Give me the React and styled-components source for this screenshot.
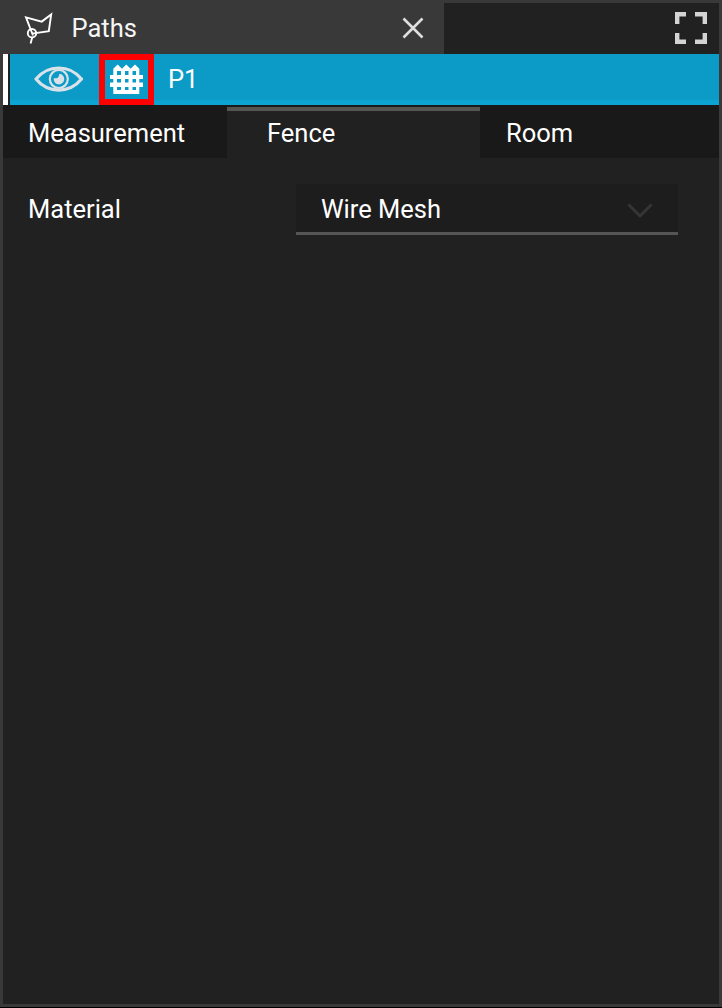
import React from "react";
import styled, { createGlobalStyle } from "styled-components";

const GlobalStyle = createGlobalStyle`
  * { box-sizing: border-box; }
  body {
    margin: 0;
    background: #000;
    color: #fff;
    font-family: Roboto, "Liberation Sans", sans-serif;
    font-size: 25.5px;
  }
`;

const Panel = styled.div`
  display: flex;
  flex-direction: column;
  height: 1007px;
  border: 3px solid #393939;
  background: #212121;
`;

const TitleBar = styled.header`
  display: flex;
  justify-content: space-between;
  height: 51px;
`;

const TitleTab = styled.div`
  display: flex;
  align-items: center;
  width: 441px;
  margin-top: -3px;
  padding: 3px 20px 0 20px;
  background: #393939;
`;

const Title = styled.span`
  flex: 1;
  margin-left: 18.5px;
  line-height: 51px;
  color: #f5f5f5;
`;

const IconButton = styled.button`
  display: flex;
  padding: 0;
  border: 0;
  background: none;
`;

const CloseButton = styled(IconButton)`
  padding-bottom: 2px;
`;

const ExpandButton = styled(IconButton)`
  padding: 9px 12px 0 0;
`;

const PathRow = styled.div`
  display: flex;
  align-items: stretch;
  height: 51px;
  background: linear-gradient(#0c9ac6 0 45px, #0ca4d2 47px);
`;

const SelectionMark = styled.div`
  width: 7px;
  border-right: 2px solid #212121;
  background: #fff;
`;

const Visibility = styled(IconButton)`
  width: 89px;
  padding: 10px 0 0 24px;
`;

const FenceToggle = styled(IconButton)`
  width: 55px;
  border: 6px solid #ff0000;
`;

const PathName = styled.span`
  margin-left: 14px;
  line-height: 50px;
`;

const Tabs = styled.nav`
  display: flex;
  height: 53px;
  padding-top: 2px;
  background: #191919;
`;

const Tab = styled.div`
  width: ${(p) => p.$width}px;
  padding-left: ${(p) => p.$inset}px;
  border-top: 4px solid ${(p) => (p.$active ? "#555651" : "transparent")};
  background: ${(p) => (p.$active ? "#212121" : "transparent")};
  line-height: 44px;
`;

const Field = styled.div`
  display: flex;
  margin-top: 26px;
  padding-left: 25px;
`;

const Label = styled.span`
  width: 268px;
  line-height: 51px;
`;

const Select = styled.div`
  display: flex;
  justify-content: space-between;
  width: 382px;
  height: 51px;
  padding: 0 25px;
  border-bottom: 3px solid #555;
  background: #1d1d1d;
  line-height: 51px;
`;

const Chevron = styled.svg`
  margin-top: 18px;
`;

const PathIcon = () => (
  <svg width="30" height="34" viewBox="0 0 30 34" fill="none" stroke="#fff" strokeWidth="1.9">
    <path d="M10 23.5 L3 5.4 L18.7 9.6 L28.2 2.4 L25.8 19.2 L9 21.6 M9.3 25 L7.6 31.5" />
    <circle cx="9" cy="21.2" r="4.2" />
  </svg>
);

const CloseIcon = () => (
  <svg width="22" height="22" viewBox="0 0 22 22" stroke="#dedede" strokeWidth="2.6">
    <path d="M1.5 1.5 L20.5 20.5 M20.5 1.5 L1.5 20.5" />
  </svg>
);

const ExpandIcon = () => (
  <svg width="32" height="32" viewBox="0 0 32 32" fill="none" stroke="#d3d3d3" strokeWidth="4.4">
    <path d="M11 2.2 H2.2 V12 M20 2.2 H29.8 V12 M2.2 21 V29.8 H11 M29.8 21 V29.8 H20" />
  </svg>
);

const EyeIcon = () => (
  <svg width="50" height="30" viewBox="0 0 50 30" fill="none" stroke="#d9e2e8">
    <path d="M2 15 C14 0.3 35.5 0.3 47.5 15 C35.5 29.7 14 29.7 2 15 Z" strokeWidth="3.2" strokeLinejoin="round" />
    <circle cx="24.8" cy="15" r="9" strokeWidth="2.2" />
    <path d="M25.5 9.8 A5.3 5.3 0 1 1 19.7 14.2 H22.5 A2.5 2.5 0 0 0 24.8 12 Z" fill="#d9e2e8" stroke="none" />
  </svg>
);

const FenceIcon = () => (
  <svg width="43" height="39" viewBox="0 0 43 39" fill="#fff">
    <path fillRule="evenodd" d="M8.3 34 V27 H5 V22.5 H8.3 V19 H5 V15 H8.3 V8.8 L12.6 4.6 L17 8.8 L21.3 4.6 L25.6 8.8 L30 4.6 L34.3 8.8 V15 H38 V19 H34.3 V22.5 H38 V27 H34.3 V34 Z
      M12 11 V15 H16 V11 Z M20 11 V15 H23.5 V11 Z M27.5 11 V15 H31 V11 Z
      M12 19 V22.5 H16 V19 Z M20 19 V22.5 H23.5 V19 Z M27.5 19 V22.5 H31 V19 Z
      M12 27 V30 H16 V27 Z M20 27 V30 H23.5 V27 Z M27.5 27 V30 H31 V27 Z" />
  </svg>
);

export default function App() {
  return (
    <>
      <GlobalStyle />
      <Panel>
        <TitleBar>
          <TitleTab>
            <PathIcon />
            <Title>Paths</Title>
            <CloseButton aria-label="Close"><CloseIcon /></CloseButton>
          </TitleTab>
          <ExpandButton aria-label="Expand"><ExpandIcon /></ExpandButton>
        </TitleBar>
        <PathRow>
          <SelectionMark />
          <Visibility aria-label="Visibility"><EyeIcon /></Visibility>
          <FenceToggle aria-label="Fence"><FenceIcon /></FenceToggle>
          <PathName>P1</PathName>
        </PathRow>
        <Tabs>
          <Tab $width={224} $inset={25}>Measurement</Tab>
          <Tab $width={253} $inset={40} $active>Fence</Tab>
          <Tab $width={239} $inset={26}>Room</Tab>
        </Tabs>
        <Field>
          <Label>Material</Label>
          <Select>
            Wire Mesh
            <Chevron width="26" height="18" viewBox="0 0 26 18" fill="none" stroke="#353535" strokeWidth="3">
              <path d="M1.5 2.5 L13 14 L24.5 2.5" />
            </Chevron>
          </Select>
        </Field>
      </Panel>
    </>
  );
}
